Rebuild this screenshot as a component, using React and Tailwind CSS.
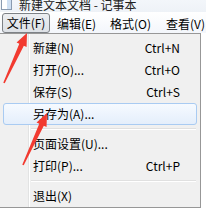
import React from "react";

const font = { fontFamily: '"Noto Sans CJK SC", "Microsoft YaHei", sans-serif' };

function Item({ label, shortcut, active }) {
  return (
    <div
      className={
        "mx-[3px] flex h-[22px] items-center justify-between rounded-[3px] border pl-[29px] pr-[16px] text-[12px] leading-[22px] text-black " +
        (active
          ? "border-[#a9cbf2] bg-[linear-gradient(#f6faff,#e4eefb)]"
          : "border-transparent")
      }
    >
      <span>{label}</span>
      {shortcut ? <span>{shortcut}</span> : null}
    </div>
  );
}

function Sep() {
  return (
    <div className="flex h-[8px] items-center pl-[31px] pr-[4px]">
      <div className="w-full border-t border-b border-t-[#e0e0e0] border-b-white" />
    </div>
  );
}

export default function App() {
  return (
    <div className="relative h-[212px] w-[206px] overflow-hidden bg-white" style={font}>
      {/* title bar */}
      <div className="flex h-[12px] items-end overflow-hidden bg-[linear-gradient(#f3f6fa,#eef2f7)]">
        <div className="mb-[2px] ml-[1px] h-[11px] w-[11px] border border-[#8a9bb0] bg-[linear-gradient(90deg,#ffffff_55%,#cfe0f3_55%)]" />
        <div className="ml-[7px] mb-[1px] text-[12px] leading-[13px] text-[#202020]">新建文本文档 - 记事本</div>
      </div>
      {/* menu bar */}
      <div className="flex h-[21px] items-start bg-[linear-gradient(#ffffff,#f3f6fb)] text-[12px] text-black">
        <div className="ml-[2px] mt-[1px] flex h-[20px] w-[48px] items-center justify-center rounded-[3px] border border-[#7d8186] bg-[linear-gradient(#eceef1,#dde1e6)] leading-[18px]">
          文件(F)
        </div>
        <div className="w-[53px] pl-[7px] pt-[3px] leading-[18px]">编辑(E)</div>
        <div className="w-[56px] pl-[7px] pt-[3px] leading-[18px]">格式(O)</div>
        <div className="pl-[7px] pt-[3px] leading-[18px] whitespace-nowrap">查看(V)</div>
      </div>
      {/* dropdown */}
      <div className="w-[201px] border-t border-r border-b border-[#979797] bg-[#f0f0f0] bg-[linear-gradient(to_right,transparent_28px,#e2e3e3_28px,#e2e3e3_29px,#ffffff_29px,#ffffff_30px,transparent_30px)] pt-[3px]">
        <Item label="新建(N)" shortcut="Ctrl+N" />
        <Item label="打开(O)..." shortcut="Ctrl+O" />
        <Item label="保存(S)" shortcut="Ctrl+S" />
        <Item label="另存为(A)..." active />
        <Sep />
        <Item label="页面设置(U)..." />
        <Item label="打印(P)..." shortcut="Ctrl+P" />
        <Sep />
        <Item label="退出(X)" />
      </div>
      {/* annotation arrows */}
      <svg className="pointer-events-none absolute left-0 top-0" width="206" height="212" viewBox="0 0 206 212">
        <polygon
          fill="#f23a30"
          points="3.27,82.67 19.3,43.75 16.57,42.5 27,33 26.57,47.1 23.84,45.85 4.73,83.33"
        />
        <polygon
          fill="#f23a30"
          points="22.27,164.66 39.28,123.75 36.56,122.5 47,113 46.54,127.1 43.82,125.85 23.73,165.34"
        />
      </svg>
    </div>
  );
}
